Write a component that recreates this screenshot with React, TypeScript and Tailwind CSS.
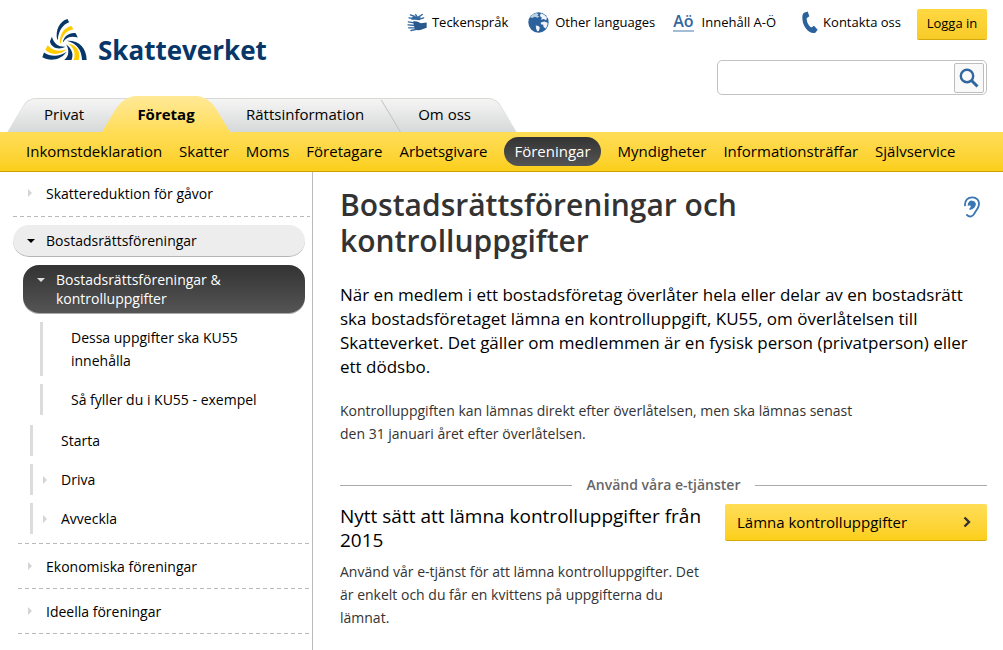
import React from 'react';

function Logo() {
  return (
    <a href="#" aria-label="Skatteverket" className="ml-[42px] mt-[18px] flex items-start gap-[11px]">
      <svg viewBox="126 55 136 128" className="h-[43px] w-[45px]" aria-hidden="true">
        <g fill="#073668">
          <path d="M172 120C165 92 180 62 203 57L208 67C190 73 176 92 174 118Z" />
          <path d="M189 128C192 108 210 97 228 100L234 113C214 108 200 112 189 128Z" />
          <path d="M156 111L150 125C154 144 176 152 197 141C178 142 162 134 156 111Z" />
          <path d="M132 158L127 173C150 186 182 182 200 157C178 171 152 172 132 158Z" />
          <path d="M201 123C236 121 260 142 261 181H247C246 152 232 131 201 123Z" />
          <path d="M199 134C216 146 223 164 215 181H193C208 170 209 150 199 134Z" />
        </g>
        <g fill="#fc0">
          <path d="M181 131C177 106 192 82 215 78L221 88C198 93 187 106 183 131Z" />
          <path d="M143 136L136 151C156 168 184 166 201 148C180 157 160 154 143 136Z" />
          <path d="M203 130C232 136 244 156 237 181H222C229 160 222 142 203 130Z" />
        </g>
      </svg>
      <span className="mt-[14px] text-[26px] leading-9 font-bold text-[#073668]">Skatteverket</span>
    </a>
  );
}

function HandsIcon() {
  return (
    <svg viewBox="0 0 60 56" className="h-[19px] w-5" aria-hidden="true">
      <g fill="none" stroke="#32669e" strokeWidth="4" strokeLinecap="round">
        <path d="M10 5L24 10M6 14L22 16M46 4L34 12M50 14L38 18M26 4L32 14" />
        <path d="M4 26L26 30M3 35L26 37M5 44L28 44M12 52L32 48" />
      </g>
      <path d="M18 9L30 11L42 13L38 21L24 20L12 20Z" fill="#32669e" />
      <path d="M18 25C30 22 36 28 42 30L59 28V44C48 48 38 54 24 50Z" fill="#28588c" />
    </svg>
  );
}

function GlobeIcon() {
  return (
    <svg viewBox="0 0 62 62" className="h-[21px] w-[21px]" aria-hidden="true">
      <circle cx="31" cy="31" r="30" fill="#2c629c" />
      <path d="M24 3C16 5 10 9 6 15L12 18L20 14L28 17L34 13L28 11L31 6Z" fill="#b9cfe4" />
      <path d="M38 4L35 12L41 17L38 23L46 21L54 24L56 17C52 11 46 6 38 4Z" fill="#eef4fa" />
      <path d="M38 31L48 28L58 32C58 38 56 44 52 49L46 44L45 38L38 36Z" fill="#eef4fa" />
      <path d="M23 40L31 41L35 46L32 56L27 57L24 49Z" fill="#eef4fa" />
    </svg>
  );
}

function PhoneIcon() {
  return (
    <svg viewBox="0 0 48 68" className="h-[23px] w-4" aria-hidden="true">
      <path d="M6 5L17 1L22 15L14 21C14 32 20 44 28 49L36 44L47 56L40 65C20 70 0 44 1 18C1 11 3 8 6 5Z" fill="#2c629c" />
    </svg>
  );
}

function EarIcon() {
  return (
    <svg viewBox="0 0 48 64" className="h-[22px] w-4" fill="none" stroke="#3a76b4" strokeLinecap="round" aria-hidden="true">
      <path d="M3 27C2 12 12 3 25 3C38 3 46 13 45 24C44 36 36 42 31 52C27 60 17 64 9 56" strokeWidth="5.5" />
      <path d="M13 26C14 17 19 14 25 15C34 16 36 25 31 31C27 35 24 37 17 39C23 34 24 30 21 25Z" fill="#3a76b4" strokeWidth="4" />
    </svg>
  );
}

const tabFill =
  "before:absolute before:inset-y-0 before:left-0 before:-z-10 before:w-1/2 before:origin-bottom before:-skew-x-[31deg] before:bg-linear-to-b before:content-[''] after:absolute after:inset-y-0 after:right-0 after:-z-10 after:w-1/2 after:origin-bottom after:skew-x-[31deg] after:bg-linear-to-b after:content-['']";

function Tabs() {
  return (
    <nav aria-label="Huvudmeny" className="flex pl-[7px] text-[15px] leading-9">
      <div
        className={`relative isolate mt-0.5 flex h-[34px] items-end ${tabFill} before:rounded-tl-lg before:border-t before:border-l before:border-[#d9d9d9] before:from-[#f5f5f4] before:to-[#d6d9d9] after:rounded-tr-lg after:border-t after:border-r after:border-[#d9d9d9] after:from-[#f5f5f4] after:to-[#d6d9d9]`}
      >
        <a href="#" className="w-[95px] pl-[37px]">Privat</a>
        <a
          href="#"
          className={`relative isolate w-32 text-center font-bold ${tabFill} before:rounded-tl-xl before:from-[#ffe996] before:to-[#ffdd55] after:rounded-tr-xl after:from-[#ffe996] after:to-[#ffdd55]`}
        >
          Företag
        </a>
        <a href="#" className="pr-[38px] pl-4">Rättsinformation</a>
        <a
          href="#"
          className="relative pr-[46px] pl-4 before:absolute before:top-1 before:bottom-0 before:-left-0.5 before:origin-bottom before:skew-x-[31deg] before:border-l before:border-[#bfc1c1] before:content-['']"
        >
          Om oss
        </a>
      </div>
    </nav>
  );
}

const sections = ['Inkomstdeklaration', 'Skatter', 'Moms', 'Företagare', 'Arbetsgivare', 'Föreningar', 'Myndigheter', 'Informationsträffar', 'Självservice'];

function Arrow({ down = false, className }: { down?: boolean; className: string }) {
  return (
    <svg viewBox="0 0 8 8" className={`size-2 shrink-0 ${className}`} fill="currentColor" aria-hidden="true">
      <path d={down ? 'M0 2H8L4 6Z' : 'M2 0V8L6 4Z'} />
    </svg>
  );
}

function Dashes() {
  return <div className="h-px bg-[repeating-linear-gradient(90deg,#b9b9b9_0_4px,transparent_4px_7px)]" />;
}

function TopItem({ children }: { children: React.ReactNode }) {
  return (
    <li>
      <a href="#" className="flex h-11 items-center gap-3 pl-2">
        <Arrow className="text-[#d4d4d4]" />
        {children}
      </a>
      <Dashes />
    </li>
  );
}

function Sidebar() {
  return (
    <nav aria-label="Undermeny" className="w-[313px] shrink-0 border-r border-[#b9b9b9] pr-0.5 text-[14px] leading-[23px]">
      <ul>
        <li className="pl-[13px]">
          <a href="#" className="flex h-11 items-center gap-3 pb-0.5 pl-[13px]">
            <Arrow className="text-[#d4d4d4]" />
            Skattereduktion för gåvor
          </a>
          <Dashes />
        </li>
        <li className="mt-2 mr-[5px] ml-[13px]">
          <a href="#" className="flex h-8 items-center gap-[11px] rounded-full border-b border-[#b5b5b5] bg-[#ededed] pl-[14px]">
            <Arrow down className="text-black" />
            Bostadsrättsföreningar
          </a>
          <ul className="mt-2">
            <li>
              <a href="#" aria-current="page" className="ml-[10px] flex h-12 items-start gap-[11px] rounded-2xl bg-linear-to-b from-[#333] to-[#555] pt-[5px] pl-[14px] leading-[19px] font-medium text-white shadow-[0_1px_0_#aaa]">
                <Arrow down className="mt-[6px] text-[#ddd]" />
                <span>Bostadsrättsföreningar &amp;<br />kontrolluppgifter</span>
              </a>
              <ul className="mt-[9px] ml-[27px] flex flex-col gap-2">
                <li className="border-l-3 border-[#dcdcdc] py-1 pr-10 pl-7"><a href="#">Dessa uppgifter ska KU55 innehålla</a></li>
                <li className="border-l-3 border-[#dcdcdc] py-1 pl-7"><a href="#">Så fyller du i KU55 - exempel</a></li>
              </ul>
            </li>
            <li className="mt-[10px] ml-[17px] border-l-3 border-[#dcdcdc] py-1 pl-7"><a href="#">Starta</a></li>
            {['Driva', 'Avveckla'].map((name) => (
              <li key={name} className="mt-2 ml-[17px] border-l-3 border-[#dcdcdc] py-1 pl-2">
                <a href="#" className="flex items-center gap-3">
                  <Arrow className="text-[#d4d4d4]" />
                  {name}
                </a>
              </li>
            ))}
          </ul>
        </li>
      </ul>
      <ul className="mt-[9px] pl-[18px]">
        <li><Dashes /></li>
        <TopItem>Ekonomiska föreningar</TopItem>
        <TopItem>Ideella föreningar</TopItem>
      </ul>
    </nav>
  );
}

export default function App() {
  return (
    <div className="min-h-screen bg-white font-['Open_Sans','Noto_Sans',sans-serif] text-black">
      <header>
        <div className="flex h-24 items-start justify-between pr-4">
          <Logo />
          <div className="flex flex-col items-end pt-[9px]">
            <div className="flex items-start text-[13px] leading-[26px]">
              <a href="#" className="flex items-center gap-[5px]"><HandsIcon />Teckenspråk</a>
              <a href="#" className="ml-5 flex items-center gap-[6px]"><GlobeIcon />Other languages</a>
              <a href="#" className="ml-[18px] flex items-center gap-2">
                <span aria-hidden="true" className="border-b-2 border-[#a3bdd6] text-[16px] leading-[17px] font-semibold text-[#32669e]">Aö</span>
                Innehåll A-Ö
              </a>
              <a href="#" className="ml-[26px] flex items-center gap-[5px]"><PhoneIcon />Kontakta oss</a>
              <button type="button" className="ml-4 h-[31px] w-[70px] rounded-xs border-b border-[#d3a90b] bg-linear-to-b from-[#ffd840] to-[#f8cb27] pb-0.5 text-[13px]">Logga in</button>
            </div>
            <form role="search" className="mt-5 flex h-[35px] w-[270px] items-center rounded-[5px] border border-[#c2c2c2] pr-0.5">
              <input type="search" aria-label="Sök" className="h-full min-w-0 flex-1 px-2 text-[14px] outline-none" />
              <button type="submit" aria-label="Sök" className="flex size-[30px] items-center justify-center rounded-xs border border-[#bdbdbd] bg-[#f9f9f9]">
                <svg viewBox="0 0 20 20" className="size-5" fill="none" stroke="#32669e" aria-hidden="true">
                  <circle cx="8" cy="8" r="6.2" strokeWidth="2.4" />
                  <path d="M12.5 12.5L18.5 18.5" strokeWidth="3" />
                </svg>
              </button>
            </form>
          </div>
        </div>
        <Tabs />
        <nav aria-label="Avdelningar" className="flex h-10 items-center gap-[17px] border-b border-[#c9a000] bg-linear-to-b from-[#ffdd55] to-[#fccf17] pl-[26px] text-[15px] whitespace-nowrap">
          {sections.map((name) => (
            <a key={name} href="#" className={name === 'Föreningar' ? 'rounded-full bg-linear-to-b from-[#333] to-[#555] px-[10px] leading-[29px] text-white' : 'leading-[29px]'}>
              {name}
            </a>
          ))}
        </nav>
      </header>
      <div className="flex min-h-[478px]">
        <Sidebar />
        <main className="min-w-0 flex-1 pt-[15px] pr-4 pl-[27px]">
          <div className="flex items-start justify-between">
            <h1 className="max-w-[480px] text-[30px] leading-9 font-semibold text-[#333]">Bostadsrättsföreningar och kontrolluppgifter</h1>
            <a href="#" aria-label="Lyssna" className="mt-[9px] mr-[7px]"><EarIcon /></a>
          </div>
          <p className="mt-6 text-[17px] leading-6">
            När en medlem i ett bostadsföretag överlåter hela eller delar av en bostadsrätt ska bostadsföretaget lämna en kontrolluppgift, KU55, om överlåtelsen till Skatteverket. Det gäller om medlemmen är en fysisk person (privatperson) eller ett dödsbo.
          </p>
          <p className="mt-5 max-w-[530px] text-[14px] leading-[23px] text-[#333]">
            Kontrolluppgiften kan lämnas direkt efter överlåtelsen, men ska lämnas senast den 31 januari året efter överlåtelsen.
          </p>
          <div className="mt-[29px] flex items-center gap-[15px] text-[14px] leading-[22px] font-semibold text-[#666] before:h-px before:flex-1 before:bg-[#aaa] before:content-[''] after:h-px after:flex-1 after:bg-[#aaa] after:content-['']">
            Använd våra e-tjänster
          </div>
          <div className="mt-2 flex items-start justify-between gap-5">
            <div className="flex-1">
              <h2 className="text-[19px] leading-6">Nytt sätt att lämna kontrolluppgifter från 2015</h2>
              <p className="mt-2 text-[14px] leading-[23px] text-[#333]">
                Använd vår e-tjänst för att lämna kontrolluppgifter. Det är enkelt och du får en kvittens på uppgifterna du lämnat.
              </p>
            </div>
            <a href="#" className="flex h-[37px] w-[262px] items-center justify-between rounded-xs border-b border-[#d3a90b] bg-linear-to-b from-[#ffdd55] to-[#fccf17] pr-4 pl-3 text-[15px]">
              Lämna kontrolluppgifter
              <svg viewBox="0 0 8 12" className="h-3 w-2" fill="none" stroke="#333" strokeWidth="2.4" aria-hidden="true">
                <path d="M1.5 1.5L6 6L1.5 10.5" />
              </svg>
            </a>
          </div>
        </main>
      </div>
    </div>
  );
}
